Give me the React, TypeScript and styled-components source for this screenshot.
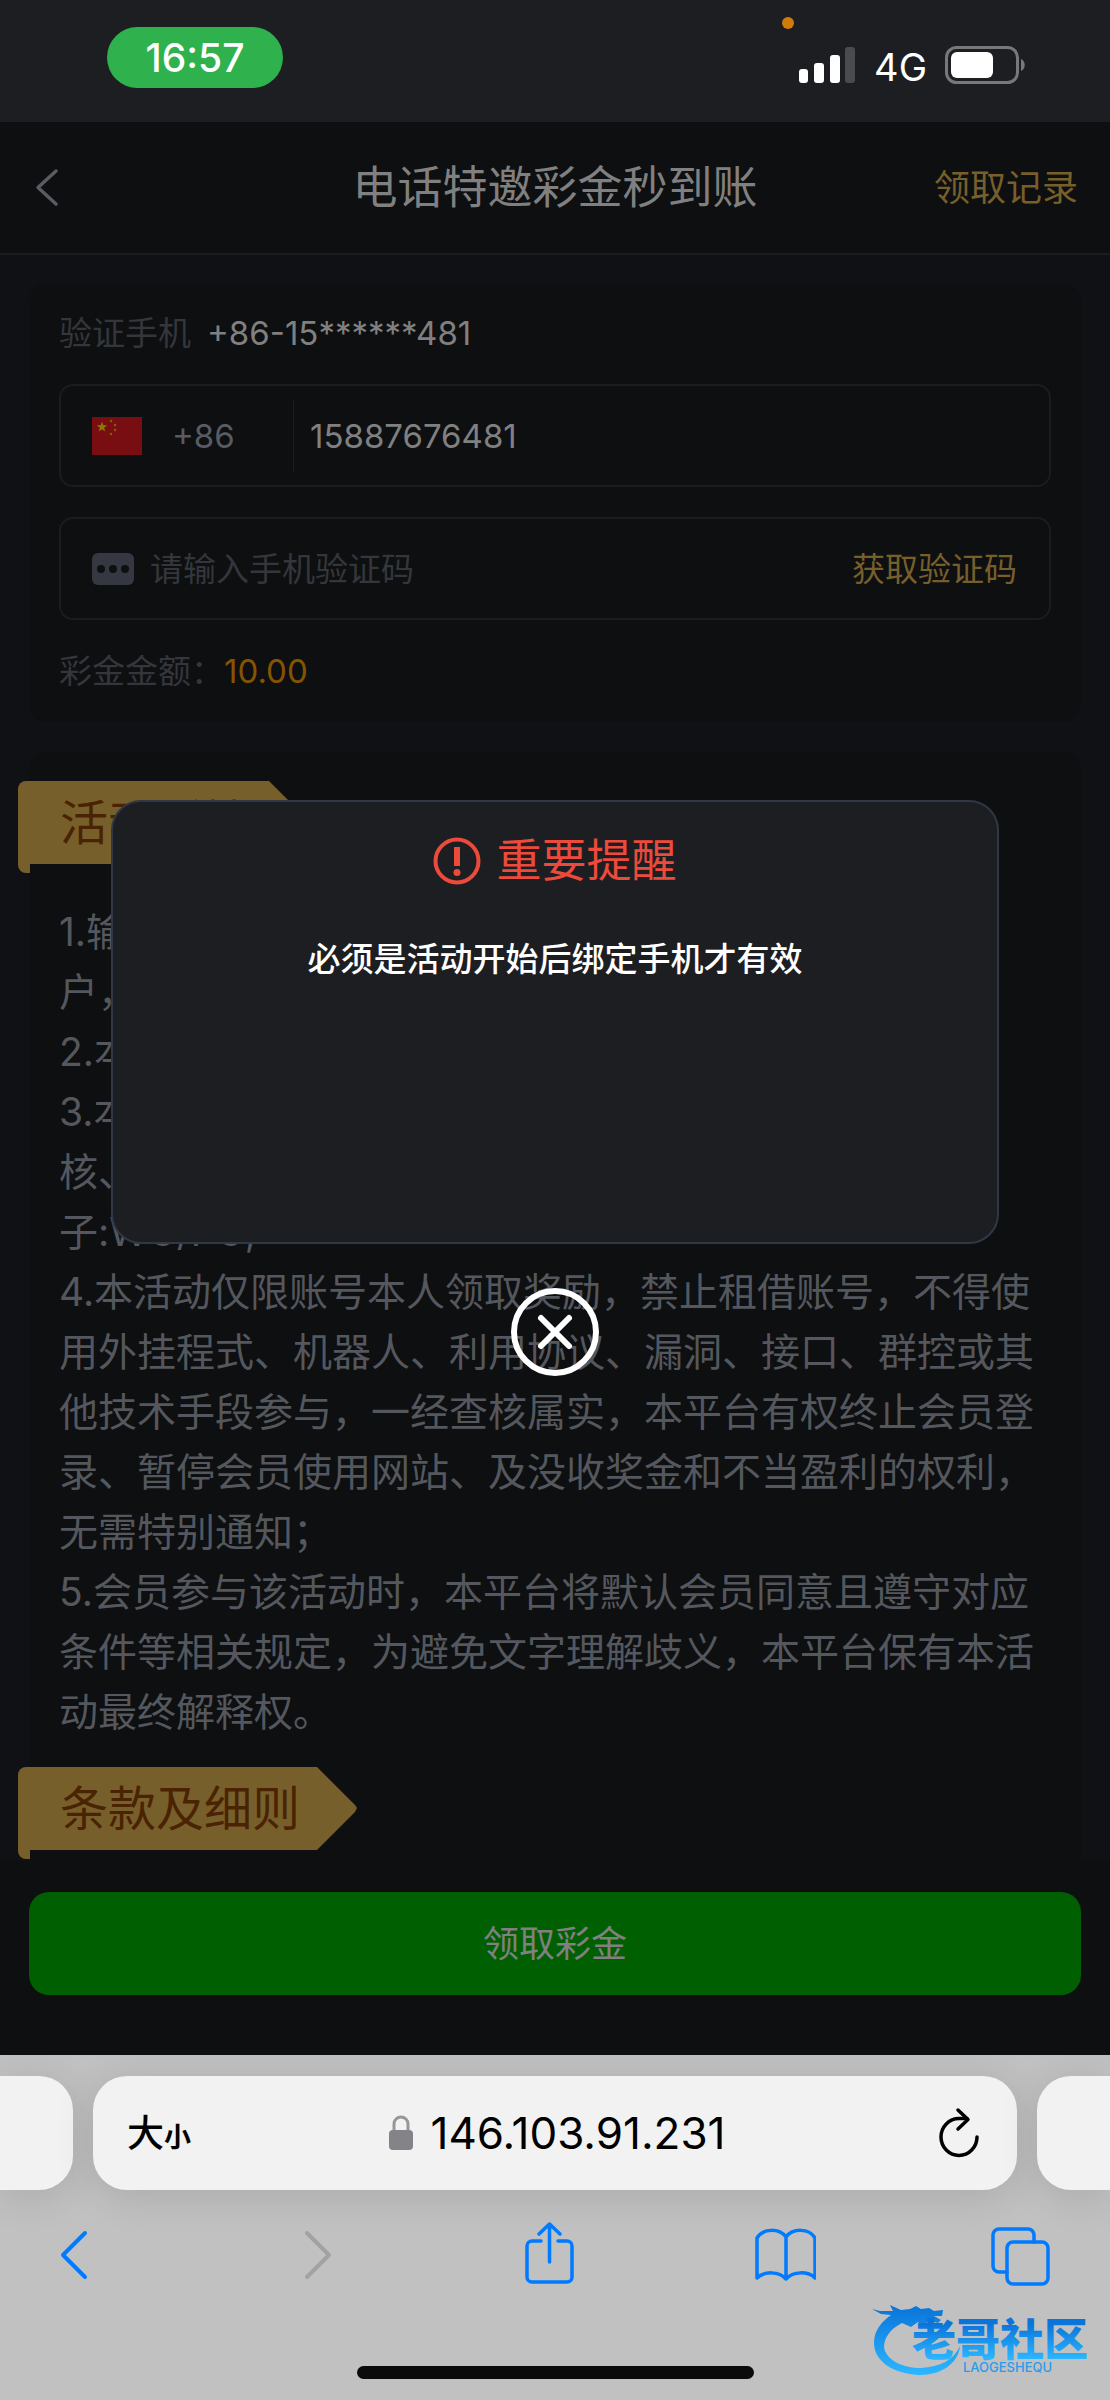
import React from 'react';
import styled, { createGlobalStyle } from 'styled-components';

const c = {
  page: '#101115',
  surface: '#0e0f11',
  line: '#1b1c22',
  faint: '#34363c',
  muted: '#54575e',
  text: '#808080',
  gold: '#775f2b',
  goldInk: '#4a2303',
  amber: '#855400',
  blue: '#007aff',
};

const Global = createGlobalStyle`
  * { box-sizing: border-box; }
  body {
    margin: 0;
    background: ${c.page};
    font-family: Inter, "Noto Sans CJK SC", sans-serif;
    color: ${c.text};
  }
  button, input {
    font: inherit;
    color: inherit;
    background: none;
    border: 0;
    padding: 0;
    margin: 0;
  }
  svg { display: block; flex: none; }
  h1, h2, p, ol { margin: 0; padding: 0; font-weight: 400; }
`;

const Screen = styled.div`
  display: flex;
  flex-direction: column;
  min-height: 100vh;
`;

/* ---------- status bar ---------- */

const StatusBar = styled.header`
  position: relative;
  display: flex;
  justify-content: space-between;
  height: 122px;
  padding: 27px 84px 0 107px;
  background: #1d1e22;
  color: #fff;
`;

const Clock = styled.time`
  width: 176px;
  height: 61px;
  border-radius: 31px;
  background: #2fb14e;
  font-size: 39px;
  line-height: 62px;
  font-weight: 500;
  text-align: center;
`;

const Signals = styled.div`
  display: flex;
  align-items: center;
  gap: 18px;
  height: 76px;
  font-size: 38px;
`;

const Network = styled.span`
  padding-top: 4px;
`;

const MicDot = styled.i`
  position: absolute;
  top: 17px;
  right: 316px;
  width: 12px;
  height: 12px;
  border-radius: 50%;
  background: #d07c09;
`;

/* ---------- web page ---------- */

const Page = styled.div`
  position: relative;
  flex: 1;
  display: flex;
  flex-direction: column;
`;

const TitleBar = styled.div`
  display: grid;
  grid-template-columns: 1fr auto 1fr;
  align-items: center;
  height: 133px;
  padding: 1px 32px 0;
  background: ${c.surface};
  border-bottom: 2px solid ${c.line};
`;

const Title = styled.h1`
  font-size: 45px;
  line-height: 60px;
`;

const IconButton = styled.button`
  display: flex;
  align-items: center;
`;

const RecordLink = styled.a`
  justify-self: end;
  font-size: 36px;
  line-height: 60px;
  color: ${c.gold};
  text-decoration: none;
`;

const Content = styled.main`
  flex: 1;
  display: flex;
  flex-direction: column;
  gap: 30px;
  padding: 29px 29px 0;
`;

const Card = styled.section`
  padding: 29px 30px;
  border-radius: 17px;
  background: #0e0f10;
`;

const FormCard = styled(Card)`
  display: flex;
  flex-direction: column;
  gap: 30px;
  height: 438px;
  padding-top: 28px;
  font-size: 33px;
  line-height: 42px;
`;

const InfoRow = styled.p<{ $accent?: boolean }>`
  display: flex;
  gap: ${p => (p.$accent ? 0 : 16)}px;
  color: ${c.faint};
  span {
    color: ${p => (p.$accent ? c.amber : c.text)};
  }
`;

const Field = styled.div`
  display: flex;
  align-items: center;
  height: 103px;
  flex: none;
  padding: 0 32px 0 31px;
  border: 2px solid ${c.line};
  border-radius: 14px;
`;

const Country = styled.button`
  display: flex;
  align-items: center;
  gap: 30px;
  width: 202px;
  height: 74px;
  border-right: 1px solid ${c.line};
  color: #585b64;
`;

const TextInput = styled.input`
  flex: 1;
  min-width: 0;
  height: 60px;
  padding-left: 16px;
  outline: none;
  &::placeholder {
    color: ${c.faint};
    opacity: 1;
  }
`;

const CodeButton = styled.button`
  color: ${c.gold};
`;

const RulesCard = styled(Card)`
  flex: 1;
  padding-bottom: 0;
  border-radius: 17px 17px 0 0;
`;

const Ribbon = styled.h2`
  position: relative;
  width: fit-content;
  height: 83px;
  margin-left: -41px;
  padding: 0 17px 0 42px;
  border-top-left-radius: 8px;
  background: ${c.gold};
  color: ${c.goldInk};
  font-size: 48px;
  line-height: 83px;

  &::before {
    content: '';
    position: absolute;
    top: 100%;
    left: 0;
    width: 12px;
    height: 9px;
    border-bottom-left-radius: 8px;
    background: inherit;
  }
  &::after {
    content: '';
    position: absolute;
    top: 0;
    left: 100%;
    width: 40px;
    height: 83px;
    background: inherit;
    clip-path: polygon(0 0, 38px 38px, 40px 41px, 38px 45px, 0 100%);
  }
`;

const Rules = styled.ol`
  padding: 38px 0 25px;
  list-style: none;
  color: ${c.muted};
  font-size: 39px;
  line-height: 60px;
`;

const ActionBar = styled.div`
  height: 194px;
  padding: 31px 29px;
  background: ${c.surface};
`;

const ClaimButton = styled.button`
  width: 100%;
  height: 103px;
  padding-bottom: 5px;
  border-radius: 20px;
  background: #005f00;
  font-size: 36px;
`;

/* ---------- reminder dialog ---------- */

const Overlay = styled.div`
  position: absolute;
  inset: 0;
  display: flex;
  flex-direction: column;
  align-items: center;
  justify-content: center;
  gap: 44px;
  padding-bottom: 2px;
`;

const Dialog = styled.div`
  width: 80%;
  min-height: 444px;
  padding: 27px;
  border: 2px solid #303845;
  border-radius: 30px;
  background: #1d1e22;
  text-align: center;
`;

const DialogTitle = styled.h2`
  display: flex;
  align-items: center;
  justify-content: center;
  gap: 15px;
  font-size: 45px;
  line-height: 64px;
  color: #ec4b3b;
`;

const DialogText = styled.p`
  margin-top: 44px;
  font-size: 33px;
  line-height: 44px;
  font-weight: 500;
  color: #fff;
`;

/* ---------- browser chrome ---------- */

const Browser = styled.footer`
  position: relative;
  display: flex;
  flex-direction: column;
  height: 345px;
  padding-top: 21px;
  overflow: hidden;
  background: #c1c1c1;
`;

const Tabs = styled.div`
  display: flex;
  gap: 20px;
`;

const SideTab = styled.div<{ $side: 'left' | 'right' }>`
  width: 73px;
  height: 114px;
  border-radius: ${p => (p.$side === 'left' ? '0 34px 34px 0' : '34px 0 0 34px')};
  background: #f2f2f2;
  box-shadow: 0 6px 40px rgba(0, 0, 0, 0.12);
`;

const AddressBar = styled.div`
  flex: 1;
  display: grid;
  grid-template-columns: 1fr auto 1fr;
  align-items: center;
  height: 114px;
  padding: 0 38px 0 34px;
  border-radius: 34px;
  background: #f2f2f2;
  box-shadow: 0 6px 40px rgba(0, 0, 0, 0.12);
  color: #000;
`;

const TextSize = styled.button`
  justify-self: start;
  padding-top: 5px;
  font-size: 37px;
  line-height: 60px;
  font-weight: 500;
  small {
    font-size: 27px;
    font-weight: 700;
  }
`;

const Address = styled.div`
  display: flex;
  align-items: center;
  gap: 18px;
  padding-left: 8px;
  font-size: 44px;
`;

const Reload = styled(IconButton)`
  justify-self: end;
`;

const Toolbar = styled.nav`
  display: flex;
  justify-content: space-between;
  padding: 29px 58px 0 42px;
`;

const HomeIndicator = styled.div`
  width: 397px;
  height: 13px;
  margin: auto auto 21px;
  border-radius: 7px;
  background: #0b0b0b;
`;

const Watermark = styled.div`
  position: absolute;
  right: 12px;
  bottom: 22px;
`;

const ToolIcon = ({ label, color = c.blue, children }: { label: string; color?: string; children: React.ReactNode }) => (
  <IconButton aria-label={label}>
    <svg width="64" height="68" viewBox="0 0 64 68" fill="none" stroke={color} strokeWidth="4" strokeLinecap="round" strokeLinejoin="round">
      {children}
    </svg>
  </IconButton>
);

const star = '0,-10 2.4,-3.2 9.5,-3.1 3.8,1.2 5.9,8.1 0,4 -5.9,8.1 -3.8,1.2 -9.5,-3.1 -2.4,-3.2';

const Flag = () => (
  <svg width="50" height="38" viewBox="0 0 50 38">
    <rect width="50" height="38" fill="#780e12" />
    <g fill="#8a7d00">
      <polygon points={star} transform="translate(10 10) scale(.55)" />
      <polygon points={star} transform="translate(19 4) scale(.18)" />
      <polygon points={star} transform="translate(23 8) scale(.18)" />
      <polygon points={star} transform="translate(23 13) scale(.18)" />
      <polygon points={star} transform="translate(19 17) scale(.18)" />
    </g>
  </svg>
);

const rules = [
  '1.输入手机号码获取验证码并完成验证的会员账',
  '户，即可领取本次活动彩金；',
  '2.本活动每位会员仅可领取一次；',
  '3.本次彩金需完成流水后方可提款审',
  '核、仅限指定场馆投注，电',
  '子:WG/PG,',
  '4.本活动仅限账号本人领取奖励，禁止租借账号，不得使用外挂程式、机器人、利用协议、漏洞、接口、群控或其他技术手段参与，一经查核属实，本平台有权终止会员登录、暂停会员使用网站、及没收奖金和不当盈利的权利，无需特别通知；',
  '5.会员参与该活动时，本平台将默认会员同意且遵守对应条件等相关规定，为避免文字理解歧义，本平台保有本活动最终解释权。',
];

export default function App() {
  return (
    <Screen lang="zh-CN">
      <Global />
      <StatusBar>
        <Clock>16:57</Clock>
        <MicDot />
        <Signals>
          <svg width="57" height="37" viewBox="0 0 57 37" fill="#fff">
            <rect x="0" y="22" width="9" height="14" rx="3" />
            <rect x="15" y="16" width="10" height="20" rx="3" />
            <rect x="31" y="8" width="10" height="28" rx="3" />
            <rect x="46" y="0" width="10" height="36" rx="3" fill="#4a4b4e" />
          </svg>
          <Network>4G</Network>
          <svg width="81" height="38" viewBox="0 0 81 38">
            <rect x="1.5" y="1.5" width="71" height="35" rx="10" fill="none" stroke="#77787a" strokeWidth="3" />
            <rect x="6" y="6" width="42" height="26" rx="6" fill="#fff" />
            <path d="M76 13c5 2 5 10 0 12z" fill="#77787a" />
          </svg>
        </Signals>
      </StatusBar>

      <Page>
        <TitleBar>
          <IconButton aria-label="返回">
            <svg width="30" height="42" viewBox="0 0 30 42" fill="none" stroke="#5a5c63" strokeWidth="3.5" strokeLinecap="round" strokeLinejoin="round">
              <path d="M24 4 6 20.500 24 37" />
            </svg>
          </IconButton>
          <Title>电话特邀彩金秒到账</Title>
          <RecordLink href="#records">领取记录</RecordLink>
        </TitleBar>

        <Content>
          <FormCard>
            <InfoRow>
              验证手机<span>+86-15******481</span>
            </InfoRow>
            <Field>
              <Country aria-label="国家代码 +86">
                <Flag />
                +86
              </Country>
              <TextInput aria-label="手机号码" type="tel" defaultValue="15887676481" />
            </Field>
            <Field>
              <svg width="42" height="32" viewBox="0 0 42 32">
                <rect width="42" height="32" rx="6" fill="#353840" />
                <g fill={c.surface}>
                  <circle cx="9" cy="16" r="4" />
                  <circle cx="21" cy="16" r="4" />
                  <circle cx="33" cy="16" r="4" />
                </g>
              </svg>
              <TextInput aria-label="手机验证码" placeholder="请输入手机验证码" />
              <CodeButton>获取验证码</CodeButton>
            </Field>
            <InfoRow $accent>
              彩金金额：<span>10.00</span>
            </InfoRow>
          </FormCard>

          <RulesCard>
            <Ribbon>活动详情</Ribbon>
            <Rules>
              {rules.map(rule => (
                <li key={rule}>{rule}</li>
              ))}
            </Rules>
            <Ribbon>条款及细则</Ribbon>
          </RulesCard>
        </Content>

        <ActionBar>
          <ClaimButton>领取彩金</ClaimButton>
        </ActionBar>

        <Overlay>
          <Dialog role="dialog" aria-modal="true" aria-labelledby="reminder">
            <DialogTitle id="reminder">
              <svg width="48" height="48" viewBox="0 0 48 48" fill="none" stroke="currentColor">
                <circle cx="24" cy="24" r="21.500" strokeWidth="4" />
                <path d="M24 10v19" strokeWidth="6" />
                <circle cx="24" cy="35.500" r="3.500" fill="currentColor" stroke="none" />
              </svg>
              重要提醒
            </DialogTitle>
            <DialogText>必须是活动开始后绑定手机才有效</DialogText>
          </Dialog>
          <IconButton aria-label="关闭">
            <svg width="88" height="88" viewBox="0 0 88 88" fill="none" stroke="#fff" strokeLinecap="round">
              <circle cx="44" cy="44" r="41" strokeWidth="6" />
              <path d="M30 30 58 58M58 30 30 58" strokeWidth="6" />
            </svg>
          </IconButton>
        </Overlay>
      </Page>

      <Browser>
        <Tabs>
          <SideTab $side="left" />
          <AddressBar>
            <TextSize>
              大<small>小</small>
            </TextSize>
            <Address>
              <svg width="24" height="36" viewBox="0 0 24 36">
                <path d="M5 17V9a7 7 0 0 1 14 0v8" fill="none" stroke="#97969b" strokeWidth="3" />
                <rect x="0" y="15" width="24" height="20" rx="4" fill="#848388" />
              </svg>
              146.103.91.231
            </Address>
            <Reload aria-label="重新加载">
              <svg width="40" height="52" viewBox="0 0 40 52" fill="none" stroke="#000" strokeWidth="3.500" strokeLinecap="round" strokeLinejoin="round">
                <path d="M38 30a18 18.500 0 1 1-18-18.500h8" />
                <path d="M19 3 29 12.500 19 22" />
              </svg>
            </Reload>
          </AddressBar>
          <SideTab $side="right" />
        </Tabs>
        <Toolbar aria-label="浏览器工具栏">
          <ToolIcon label="后退">
            <path d="M43 14 21 36 43 58" />
          </ToolIcon>
          <ToolIcon label="前进" color="#a2a2a2">
            <path d="M28 14 50 36 28 58" />
          </ToolIcon>
          <ToolIcon label="分享">
            <path d="M26 22H17a5 5 0 0 0-5 5v31a5 5 0 0 0 5 5h35a5 5 0 0 0 5-5V27a5 5 0 0 0-5-5H43M34.500 43V5M24 15 34.500 5 45 15" strokeWidth="3.500" />
          </ToolIcon>
          <ToolIcon label="书签">
            <path d="M34 18C27 9 11 9 5 19V59C12 52 27 52 34 60 41 52 56 52 63 59V19C57 9 41 9 34 18V60" strokeWidth="3.500" />
          </ToolIcon>
          <ToolIcon label="标签页">
            <rect x="19" y="23" width="41" height="42" rx="6" strokeWidth="3.500" />
            <path d="M19 53H11a6 6 0 0 1-6-6V16a6 6 0 0 1 6-6H40a6 6 0 0 1 6 6V23" strokeWidth="3.500" />
          </ToolIcon>
        </Toolbar>
        <HomeIndicator />
        <Watermark>
          <svg width="226" height="76" viewBox="0 0 226 76" role="img" aria-label="老哥社区">
            <defs>
              <linearGradient id="sky" gradientUnits="userSpaceOnUse" x1="0" y1="8" x2="0" y2="70">
                <stop offset="0" stopColor="#0b78dc" />
                <stop offset="1" stopColor="#2bb4ff" />
              </linearGradient>
              <linearGradient id="word" gradientUnits="userSpaceOnUse" x1="0" y1="22" x2="0" y2="56">
                <stop offset="0" stopColor="#0a74da" />
                <stop offset="1" stopColor="#2bb4ff" />
              </linearGradient>
            </defs>
            <path
              fill="url(#sky)"
              d="M0 7 8 9 21 9 18 3 29 8 38 7 44 4 49 7 57 6 62 9 71 8 70 14 62 14 69 18 66 21 57 19 50 24 46 20 39 25 30 21C18 27 12 36 12 45 14 58 30 66 49 66 68 65 82 58 88 44 86 62 69 73 48 73 21 72 2 59 2 41 2 29 9 20 19 13L9 12Z"
            />
            <text x="40" y="54" fontFamily="Noto Sans CJK SC, sans-serif" fontWeight="900" fontSize="44" fill="url(#word)">
              老哥社区
            </text>
            <text x="91" y="70" fontFamily="Inter, sans-serif" fontWeight="500" fontSize="13" fill="#2b9bea">
              LAOGESHEQU
            </text>
          </svg>
        </Watermark>
      </Browser>
    </Screen>
  );
}
